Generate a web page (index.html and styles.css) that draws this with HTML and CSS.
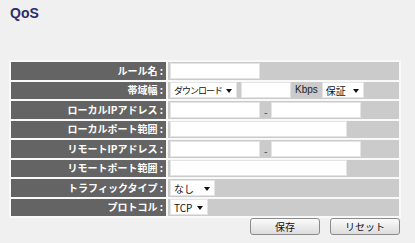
FILE: index.html
```html
<!DOCTYPE html>
<html lang="ja">

<head>
    <meta charset="UTF-8">
    <title>QoS</title>
    <link rel="stylesheet" href="styles.css">
</head>

<body>
    <div class="page">
        <h1 class="title">QoS</h1>

        <!-- ルール設定 -->
        <table class="qos-form">
            <tr>
                <th>ルール名 :</th>
                <td><input type="text" class="field w90"></td>
            </tr>
            <tr>
                <th>帯域幅 :</th>
                <td>
                    <div class="line">
                        <div class="sel w67 narrow">ダウンロード<span class="arrow"></span></div>
                        <input type="text" class="field w50">
                        <span class="unit">Kbps</span>
                        <div class="sel w42">保証<span class="arrow"></span></div>
                    </div>
                </td>
            </tr>
            <tr>
                <th>ローカルIPアドレス :</th>
                <td>
                    <div class="line">
                        <input type="text" class="field w90">
                        <span class="dash">-</span>
                        <input type="text" class="field w90">
                    </div>
                </td>
            </tr>
            <tr>
                <th>ローカルポート範囲 :</th>
                <td><input type="text" class="field w177"></td>
            </tr>
            <tr>
                <th>リモートIPアドレス :</th>
                <td>
                    <div class="line">
                        <input type="text" class="field w90">
                        <span class="dash">-</span>
                        <input type="text" class="field w90">
                    </div>
                </td>
            </tr>
            <tr>
                <th>リモートポート範囲 :</th>
                <td><input type="text" class="field w177"></td>
            </tr>
            <tr>
                <th>トラフィックタイプ :</th>
                <td><div class="sel w45">なし<span class="arrow"></span></div></td>
            </tr>
            <tr>
                <th>プロトコル :</th>
                <td><div class="sel w38">TCP<span class="arrow"></span></div></td>
            </tr>
        </table>

        <div class="buttons">
            <button class="btn">保存</button>
            <button class="btn">リセット</button>
        </div>
    </div>
</body>

</html>
```

FILE: styles.css
```css
body {
    margin: 0;
    background-color: #f0f0f0;
    font-family: "Noto Sans CJK JP", "Liberation Sans", sans-serif;
}

.page {
    padding: 5px 0 0 9px;
    width: 392px;
}

.title {
    margin: 0 0 39px 1px;
    font-family: "Liberation Sans", Arial, sans-serif;
    font-size: 14px;
    line-height: 16px;
    font-weight: bold;
    color: #2c2c6c;
}

.qos-form {
    width: 392px;
    border-collapse: separate;
    border-spacing: 2px;
    background-color: #f9f9f9;
}

.qos-form th {
    width: 152px;
    height: 17.5px;
    padding: 0 3px 0 0;
    background-color: #646464;
    color: #fff;
    font-size: 10px;
    font-weight: bold;
    text-align: right;
    line-height: 12px;
    white-space: nowrap;
}

.qos-form td {
    height: 17.5px;
    padding: 0 0 0 2px;
    background-color: #cbcbcb;
    font-size: 10px;
    line-height: 12px;
}

.line {
    display: flex;
    align-items: center;
    gap: 4px;
}

.field {
    display: block;
    box-sizing: border-box;
    height: 16px;
    margin: 0;
    padding: 0;
    border: 1px solid #e4e4e4;
    background-color: #fff;
}

.w38 { width: 38px; }
.w42 { width: 42px; }
.w45 { width: 45px; }
.w50 { width: 50px; }
.w67 { width: 67px; }
.w90 { width: 90px; }
.w177 { width: 177px; }

.sel {
    position: relative;
    box-sizing: border-box;
    height: 16px;
    padding: 1px 0 0 3px;
    border: 1px solid #e4e4e4;
    background-color: #fff;
    color: #111;
    font-size: 10px;
    line-height: 13px;
    white-space: nowrap;
}

.sel.narrow {
    font-size: 9px;
    letter-spacing: -1px;
}

.arrow {
    position: absolute;
    right: 4px;
    top: 6px;
    border-left: 3px solid transparent;
    border-right: 3px solid transparent;
    border-top: 4px solid #111;
}

.unit {
    font-family: "Liberation Sans", Arial, sans-serif;
    font-size: 10px;
    color: #222;
}

.dash {
    padding-top: 5px;
    font-size: 10px;
    color: #333;
}

.buttons {
    display: flex;
    justify-content: flex-end;
    gap: 10px;
    padding-right: 1px;
}

.btn {
    width: 70px;
    height: 17px;
    padding: 0;
    border: 1px solid #8a8a8a;
    border-radius: 3px;
    background: linear-gradient(#fbfbfb, #dcdcdc);
    font-family: "Noto Sans CJK JP", sans-serif;
    font-size: 10px;
    line-height: 14px;
    color: #111;
}
```
